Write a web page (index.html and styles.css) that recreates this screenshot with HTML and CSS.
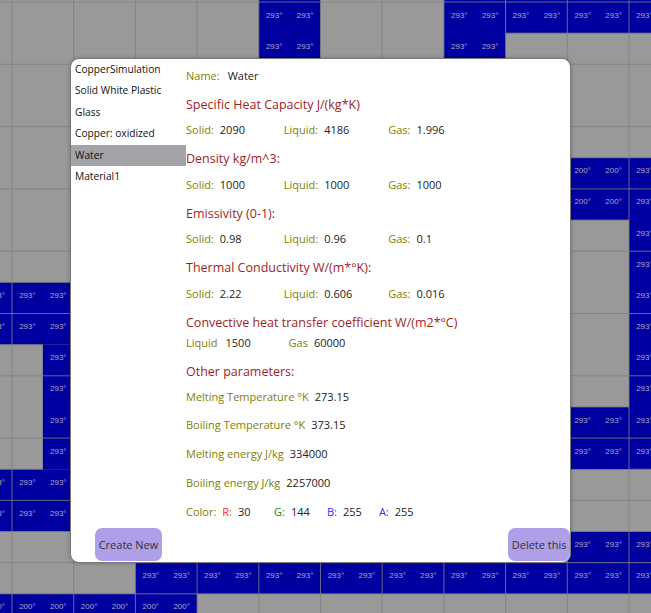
FILE: index.html
```html
<!DOCTYPE html>
<html lang="en">
<head>
<meta charset="utf-8">
<title>Materials</title>
<link rel="stylesheet" href="styles.css">
</head>
<body>
<div class="stage">
  <svg class="field" width="651" height="613" viewBox="0 0 651 613">
    <rect class="cell-gray" x="0" y="0" width="651" height="613"/>
    <g class="cell-blue">
      <rect x="258.8" y="0" width="61.7" height="64.3"/>
      <rect x="443.9" y="0" width="61.7" height="64.3"/>
      <rect x="505.6" y="0" width="150" height="33.15"/>
      <rect x="567.3" y="157.75" width="61.7" height="62.3"/>
      <rect x="629" y="157.75" width="30" height="311.5"/>
      <rect x="567.3" y="406.95" width="61.7" height="62.3"/>
      <rect x="567.3" y="531.55" width="90" height="31.15"/>
      <rect x="135.4" y="562.7" width="520" height="31.15"/>
      <rect x="0" y="593.85" width="197.1" height="20"/>
      <rect x="0" y="282.35" width="73.7" height="62.3"/>
      <rect x="42.85" y="344.65" width="30.85" height="124.6"/>
      <rect x="0" y="469.25" width="73.7" height="62.3"/>
    </g>
    <path class="grid" d="M12 0V613M73.7 0V613M135.4 0V613M197.1 0V613M258.8 0V613M320.5 0V613M382.2 0V613M443.9 0V613M505.6 0V613M567.3 0V613M629 0V613M0 2H651M0 64.3H651M0 126.6H651M0 188.9H651M0 251.2H651M0 313.5H651M0 375.8H651M0 438.1H651M0 500.4H651M0 562.7H651"/>
    <path class="grid" d="M505.6 33.15H651M0 282.35H73.7M0 344.65H42.85M0 469.25H42.85M0 531.55H73.7M567.3 531.55H651M0 593.85H651M567.3 157.75H651M567.3 220.05H629M567.3 406.95H629M629 469.25H651"/>
    <g class="temps">
      <text x="274.2" y="17.6">293°</text><text x="305.1" y="17.6">293°</text>
      <text x="274.2" y="48.7">293°</text><text x="305.1" y="48.7">293°</text>
      <text x="459.3" y="17.6">293°</text><text x="490.2" y="17.6">293°</text>
      <text x="459.3" y="48.7">293°</text><text x="490.2" y="48.7">293°</text>
      <text x="521" y="17.6">293°</text><text x="551.9" y="17.6">293°</text>
      <text x="582.7" y="17.6">293°</text><text x="613.6" y="17.6">293°</text>
      <text x="644.4" y="17.6">293°</text>
      <text x="582.7" y="173.3">200°</text><text x="613.6" y="173.3">200°</text>
      <text x="582.7" y="204.4">200°</text><text x="613.6" y="204.4">200°</text>
      <text x="644.4" y="173.3">293°</text><text x="644.4" y="204.4">293°</text>
      <text x="644.4" y="235.6">293°</text><text x="644.4" y="266.7">293°</text>
      <text x="644.4" y="297.9">293°</text><text x="644.4" y="329">293°</text>
      <text x="644.4" y="360.2">293°</text><text x="644.4" y="391.3">293°</text>
      <text x="644.4" y="422.5">293°</text><text x="644.4" y="453.6">293°</text>
      <text x="582.7" y="422.5">293°</text><text x="613.6" y="422.5">293°</text>
      <text x="582.7" y="453.6">293°</text><text x="613.6" y="453.6">293°</text>
      <text x="582.7" y="547.1">293°</text><text x="613.6" y="547.1">293°</text>
      <text x="644.4" y="547.1">293°</text>
      <text x="150.8" y="578.2">293°</text><text x="181.7" y="578.2">293°</text>
      <text x="212.5" y="578.2">293°</text><text x="243.4" y="578.2">293°</text>
      <text x="274.2" y="578.2">293°</text><text x="305.1" y="578.2">293°</text>
      <text x="335.9" y="578.2">293°</text><text x="366.8" y="578.2">293°</text>
      <text x="397.6" y="578.2">293°</text><text x="428.5" y="578.2">293°</text>
      <text x="459.3" y="578.2">293°</text><text x="490.2" y="578.2">293°</text>
      <text x="521" y="578.2">293°</text><text x="551.9" y="578.2">293°</text>
      <text x="582.7" y="578.2">293°</text><text x="613.6" y="578.2">293°</text>
      <text x="644.4" y="578.2">293°</text>
      <text x="-3.45" y="609.4">200°</text><text x="27.4" y="609.4">200°</text>
      <text x="58.3" y="609.4">200°</text><text x="89.1" y="609.4">200°</text>
      <text x="120" y="609.4">200°</text><text x="150.8" y="609.4">200°</text>
      <text x="181.7" y="609.4">200°</text>
      <text x="-3.45" y="297.9">293°</text><text x="27.4" y="297.9">293°</text><text x="58.3" y="297.9">293°</text>
      <text x="-3.45" y="329">293°</text><text x="27.4" y="329">293°</text><text x="58.3" y="329">293°</text>
      <text x="58.3" y="360.2">293°</text><text x="58.3" y="391.3">293°</text>
      <text x="58.3" y="422.5">293°</text><text x="58.3" y="453.6">293°</text>
      <text x="-3.45" y="484.8">293°</text><text x="27.4" y="484.8">293°</text><text x="58.3" y="484.8">293°</text>
      <text x="-3.45" y="515.9">293°</text><text x="27.4" y="515.9">293°</text><text x="58.3" y="515.9">293°</text>
    </g>
  </svg>

  <div class="dialog">
    <div class="side">
      <ul class="materials">
        <li>CopperSimulation</li>
        <li>Solid White Plastic</li>
        <li>Glass</li>
        <li>Copper: oxidized</li>
        <li class="selected">Water</li>
        <li>Material1</li>
      </ul>
      <button class="btn create">Create New</button>
    </div>
    <div class="main">
      <div class="line"><span class="lbl name-lbl">Name:</span><span class="val">Water</span></div>

      <h2 class="head">Specific Heat Capacity J/(kg*K)</h2>
      <div class="line row"><span class="lbl">Solid:</span><span class="val w64">2090</span><span class="lbl">Liquid:</span><span class="val w64">4186</span><span class="lbl">Gas:</span><span class="val">1.996</span></div>

      <h2 class="head">Density kg/m^3:</h2>
      <div class="line row"><span class="lbl">Solid:</span><span class="val w64">1000</span><span class="lbl">Liquid:</span><span class="val w64">1000</span><span class="lbl">Gas:</span><span class="val">1000</span></div>

      <h2 class="head">Emissivity (0-1):</h2>
      <div class="line row"><span class="lbl">Solid:</span><span class="val w64">0.98</span><span class="lbl">Liquid:</span><span class="val w64">0.96</span><span class="lbl">Gas:</span><span class="val">0.1</span></div>

      <h2 class="head">Thermal Conductivity W/(m*°K):</h2>
      <div class="line row"><span class="lbl">Solid:</span><span class="val w64">2.22</span><span class="lbl">Liquid:</span><span class="val w64">0.606</span><span class="lbl">Gas:</span><span class="val">0.016</span></div>

      <h2 class="head">Convective heat transfer coefficient W/(m2*°C)</h2>
      <div class="line row tight"><span class="lbl wide">Liquid</span><span class="val w60">1500</span><span class="lbl">Gas</span><span class="val">60000</span></div>

      <h2 class="head">Other parameters:</h2>
      <div class="line param first"><span class="lbl">Melting Temperature °K</span><span class="val">273.15</span></div>
      <div class="line param"><span class="lbl">Boiling Temperature °K</span><span class="val">373.15</span></div>
      <div class="line param"><span class="lbl">Melting energy J/kg</span><span class="val">334000</span></div>
      <div class="line param"><span class="lbl">Boiling energy J/kg</span><span class="val">2257000</span></div>
      <div class="line param"><span class="lbl">Color:</span><span class="lbl ch-r">R:</span><span class="val w36">30</span><span class="lbl ch-g">G:</span><span class="val w36">144</span><span class="lbl ch-b">B:</span><span class="val w36">255</span><span class="lbl ch-a">A:</span><span class="val">255</span></div>

      <button class="btn delete">Delete this</button>
    </div>
  </div>
</div>
</body>
</html>
```

FILE: styles.css
```css
html, body {
  margin: 0;
  padding: 0;
}

body {
  width: 651px;
  height: 613px;
  overflow: hidden;
  background: #999999;
  font-family: "Open Sans", "Noto Sans", sans-serif;
}

.stage {
  position: relative;
  width: 651px;
  height: 613px;
  overflow: hidden;
}

/* simulation canvas */
.field {
  position: absolute;
  left: 0;
  top: 0;
  display: block;
}

.cell-gray {
  fill: #999999;
}

.cell-blue rect {
  fill: #0000a0;
}

.grid {
  fill: none;
  stroke: rgba(128, 128, 128, 0.8);
  stroke-width: 1;
}

.temps text {
  font-family: "Liberation Sans", Arial, sans-serif;
  font-size: 8px;
  fill: #a8a8c8;
  text-anchor: middle;
}

/* dialog */
.dialog {
  position: absolute;
  left: 70px;
  top: 58px;
  width: 501px;
  height: 505px;
  box-sizing: border-box;
  background: #ffffff;
  border: 1px solid #7a7a7a;
  border-radius: 9px;
  box-shadow: 0 0 4px rgba(0, 0, 0, 0.25);
  display: flex;
}

.side {
  width: 115px;
  display: flex;
  flex-direction: column;
}

.materials {
  list-style: none;
  margin: 0;
  padding: 0;
}

.materials li {
  height: 21.4px;
  line-height: 21.4px;
  padding-left: 4px;
  font-size: 10.2px;
  color: #111111;
  white-space: nowrap;
}

.materials li.selected {
  background: #a4a4a8;
}

.btn {
  border: 0;
  border-radius: 7px;
  background: #ae9fe8;
  color: #333333;
  font-family: inherit;
  font-size: 11px;
  height: 33px;
  padding: 0 3.5px;
  margin-top: auto;
  margin-bottom: 1px;
}

.create {
  align-self: center;
}

.delete {
  align-self: flex-end;
}

.main {
  flex: 1;
  display: flex;
  flex-direction: column;
  padding-top: 6.5px;
}

.line {
  height: 20px;
  line-height: 20px;
  font-size: 11px;
  white-space: nowrap;
}

.head {
  margin: 9px 0 0;
  height: 20px;
  line-height: 20px;
  font-size: 12.5px;
  font-weight: normal;
  color: #a01e1e;
  white-space: nowrap;
}

.row {
  margin-top: 5.5px;
}

.row.tight {
  margin-top: 0;
}

.param {
  margin-top: 8.75px;
}

.param.first {
  margin-top: 5px;
}

.lbl {
  color: #808000;
  margin-right: 6px;
}

.name-lbl {
  margin-right: 8px;
}

.lbl.wide {
  margin-right: 8px;
}

.val {
  color: #222222;
  display: inline-block;
}

.w64 {
  width: 64px;
}

.w60 {
  width: 63px;
}

.w36 {
  width: 36px;
}

.ch-r {
  color: #ff2a2a;
}

.ch-g {
  color: #1a8a1a;
}

.ch-b {
  color: #3333ff;
}

.ch-a {
  color: #3333ff;
}
```
